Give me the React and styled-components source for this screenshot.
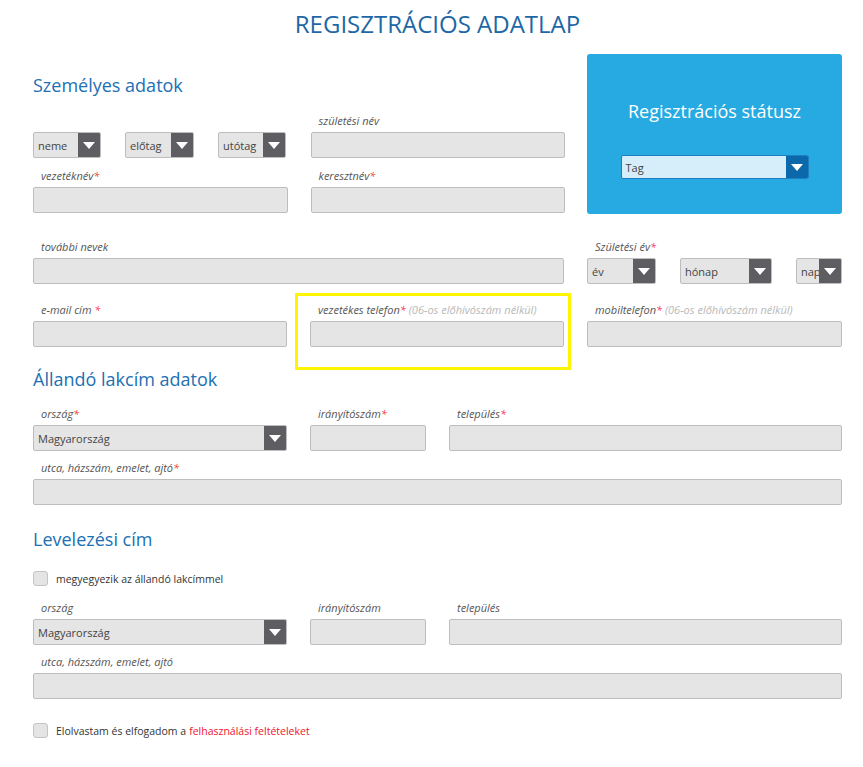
import React from "react";
import styled, { createGlobalStyle } from "styled-components";

const GlobalStyle = createGlobalStyle`
  body {
    margin: 0;
    background: #fff;
    font-family: "Open Sans", "Noto Sans", sans-serif;
  }
`;

const Page = styled.div`
  width: 809px;
  padding: 9px 0 30px 33px;
`;

const Title = styled.h1`
  margin: 0;
  font-size: 24px;
  line-height: 30px;
  font-weight: 400;
  color: #1d67a6;
  text-align: center;
`;

const TopRow = styled.div`
  display: flex;
  gap: 22px;
  margin-top: 15px;
`;

const LeftPart = styled.div`
  width: 532px;
`;

const Heading = styled.h2`
  margin: ${(p) => p.$mt || 0}px 0 0;
  font-size: 18px;
  line-height: 24px;
  font-weight: 400;
  color: #2070b3;
`;

const Grid = styled.div`
  display: grid;
  grid-template-columns: ${(p) => p.$cols || "repeat(3, 1fr)"};
  column-gap: 23px;
  row-gap: ${(p) => p.$rowGap || 5}px;
  margin-top: ${(p) => p.$mt || 0}px;
`;

const FieldBox = styled.div`
  position: relative;
  grid-column: ${(p) => p.$span || "auto"};
`;

const Label = styled.div`
  height: 14px;
  line-height: 14px;
  margin-bottom: 4px;
  padding-left: 8px;
  font-size: 11px;
  font-style: italic;
  color: #555;
  white-space: nowrap;
  em {
    font-style: italic;
    color: #f5353f;
  }
  span {
    color: #b8b8b8;
  }
`;

const Input = styled.div`
  height: 24px;
  background: #e5e5e5;
  border: 1px solid #bdbdbd;
  border-radius: 2px;
`;

const SelectBox = styled.div`
  position: relative;
  display: flex;
  align-items: center;
  box-sizing: border-box;
  width: ${(p) => (p.$w ? p.$w + "px" : "auto")};
  height: ${(p) => (p.$light ? 24 : 26)}px;
  background: ${(p) => (p.$light ? "#d6eef9" : "#e5e5e5")};
  border: 1px solid ${(p) => (p.$light ? "#1d7fc0" : "#bdbdbd")};
  border-radius: 2px;
  overflow: hidden;
  padding-left: 4px;
  font-size: 11px;
  color: #444;
`;

const Arrow = styled.div`
  position: absolute;
  top: 0;
  right: 0;
  bottom: 0;
  width: 22px;
  background: ${(p) => (p.$blue ? "#0b68ab" : "#5e5d62")};
  display: flex;
  align-items: center;
  justify-content: center;
`;

const Tri = () => (
  <svg width="12" height="7" viewBox="0 0 12 7">
    <polygon points="0,0 12,0 6,7" fill="#fff" />
  </svg>
);

const Select = ({ w, text, light }) => (
  <SelectBox $w={w} $light={light}>
    {text}
    <Arrow $blue={light}>
      <Tri />
    </Arrow>
  </SelectBox>
);

const SelectRow = styled.div`
  display: flex;
  gap: ${(p) => p.$gap || 24}px;
  justify-content: ${(p) => (p.$spread ? "space-between" : "flex-start")};
`;

const Panel = styled.div`
  width: 255px;
  height: 160px;
  background: #27aae1;
  border-radius: 3px;
  display: flex;
  flex-direction: column;
  align-items: center;
`;

const PanelTitle = styled.div`
  margin-top: 45px;
  font-size: 18px;
  line-height: 24px;
  color: #fff;
`;

const PanelSelect = styled.div`
  margin-top: 32px;
  width: 188px;
`;

const Highlight = styled.div`
  position: absolute;
  left: -15px;
  top: -10px;
  right: -7px;
  bottom: -23px;
  border: 3px solid #fff500;
  pointer-events: none;
`;

const CheckRow = styled.label`
  display: flex;
  align-items: center;
  margin-top: ${(p) => p.$mt || 0}px;
  font-size: 10.5px;
  color: #333;
  a {
    color: #f0142e;
    text-decoration: none;
    margin-left: 3px;
  }
`;

const Box = styled.span`
  width: 13px;
  height: 13px;
  background: #e4e4e4;
  border: 1px solid #c4c4c4;
  border-radius: 3px;
  margin-right: 8px;
`;

const Req = () => <em>*</em>;

function Field({ label, children, span }) {
  return (
    <FieldBox $span={span}>
      <Label>{label}</Label>
      {children || <Input />}
    </FieldBox>
  );
}

export default function App() {
  return (
    <>
      <GlobalStyle />
      <Page>
        <Title>REGISZTRÁCIÓS ADATLAP</Title>
        <TopRow>
          <LeftPart>
            <Heading $mt={19}>Személyes adatok</Heading>
            <Grid $cols="1fr 1fr" $rowGap={11} $mt={17}>
              <Field label="">
                <SelectRow>
                  <Select w={68} text="neme" />
                  <Select w={69} text="előtag" />
                  <Select w={68} text="utótag" />
                </SelectRow>
              </Field>
              <Field label="születési név" />
              <Field label={<>vezetéknév<Req /></>} />
              <Field label={<>keresztnév<Req /></>} />
            </Grid>
          </LeftPart>
          <Panel>
            <PanelTitle>Regisztrációs státusz</PanelTitle>
            <PanelSelect>
              <Select text="Tag" light />
            </PanelSelect>
          </Panel>
        </TopRow>

        <Grid $rowGap={19} $mt={26}>
          <Field label="további nevek" span="span 2" />
          <Field label={<>Születési év<Req /></>}>
            <SelectRow $spread>
              <Select w={69} text="év" />
              <Select w={92} text="hónap" />
              <Select w={46} text="nap" />
            </SelectRow>
          </Field>
          <Field label={<>e-mail cím <Req /></>} />
          <FieldBox>
            <Label>
              vezetékes telefon<Req /> <span>(06-os előhívószám nélkül)</span>
            </Label>
            <Input />
            <Highlight />
          </FieldBox>
          <Field label={<>mobiltelefon<Req /> <span>(06-os előhívószám nélkül)</span></>} />
        </Grid>

        <Heading $mt={20}>Állandó lakcím adatok</Heading>
        <Grid $cols="254px 116px 1fr" $rowGap={10} $mt={16}>
          <Field label={<>ország<Req /></>}>
            <Select text="Magyarország" />
          </Field>
          <Field label={<>irányítószám<Req /></>} />
          <Field label={<>település<Req /></>} />
          <Field label={<>utca, házszám, emelet, ajtó<Req /></>} span="1 / -1" />
        </Grid>

        <Heading $mt={22}>Levelezési cím</Heading>
        <CheckRow $mt={20}>
          <Box />
          megyegyezik az állandó lakcímmel
        </CheckRow>
        <Grid $cols="254px 116px 1fr" $rowGap={10} $mt={15}>
          <Field label="ország">
            <Select text="Magyarország" />
          </Field>
          <Field label="irányítószám" />
          <Field label="település" />
          <Field label="utca, házszám, emelet, ajtó" span="1 / -1" />
        </Grid>

        <CheckRow $mt={24}>
          <Box />
          Elolvastam és elfogadom a<a href="#">felhasználási feltételeket</a>
        </CheckRow>
      </Page>
    </>
  );
}
